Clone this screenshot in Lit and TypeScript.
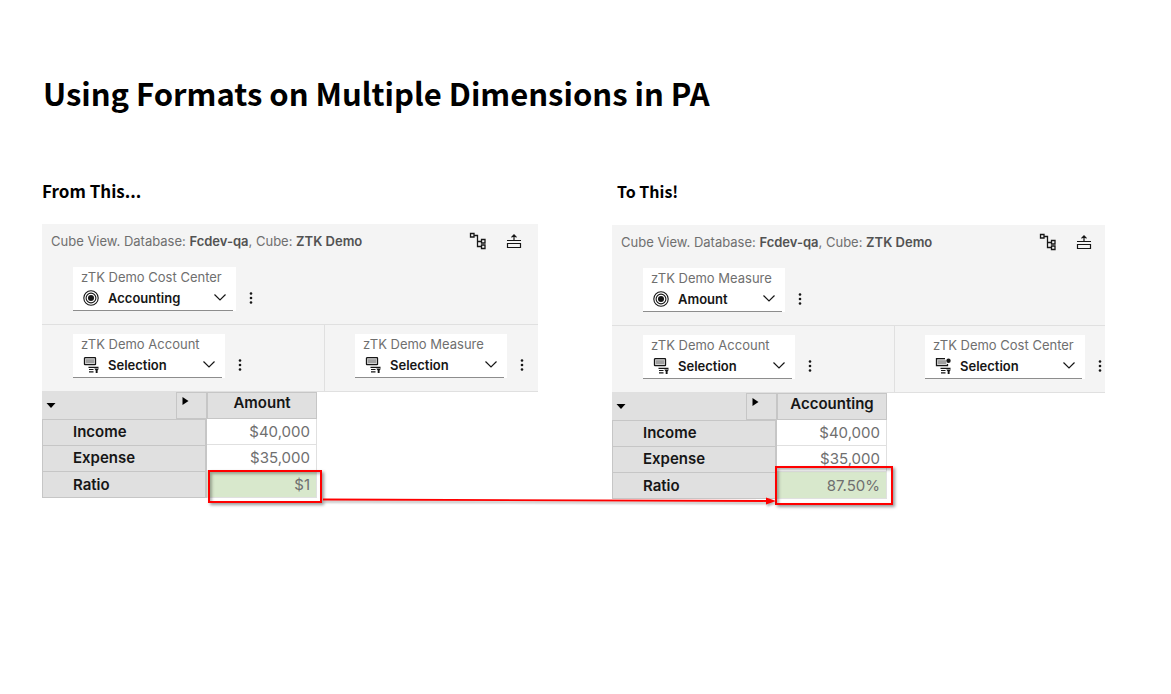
import { LitElement, html, svg, css } from "lit";
import { customElement, property } from "lit/decorators.js";

type Glyph = "member" | "set" | "setDot";

interface Selector {
  label: string;
  value: string;
  glyph: Glyph;
  width: number;
}

interface View {
  context: Selector;
  rows: Selector;
  columns: Selector;
  header: string;
  ratio: string;
}

const FROM: View = {
  context: { label: "zTK Demo Cost Center", value: "Accounting", glyph: "member", width: 160 },
  rows: { label: "zTK Demo Account", value: "Selection", glyph: "set", width: 149 },
  columns: { label: "zTK Demo Measure", value: "Selection", glyph: "set", width: 149 },
  header: "Amount",
  ratio: "$1",
};

const TO: View = {
  context: { label: "zTK Demo Measure", value: "Amount", glyph: "member", width: 139 },
  rows: { label: "zTK Demo Account", value: "Selection", glyph: "set", width: 149 },
  columns: { label: "zTK Demo Cost Center", value: "Selection", glyph: "setDot", width: 157 },
  header: "Accounting",
  ratio: "87.50%",
};

const glyph = (kind: Glyph) => html`<svg class="glyph" viewBox="0 0 16 16" aria-hidden="true">
  ${kind === "member"
    ? svg`<circle cx="8" cy="8" r="7.2" fill="none" stroke="#161616" stroke-width="1.1"/>
        <circle cx="8" cy="8" r="4.9" fill="none" stroke="#161616" stroke-width="1.1"/>
        <circle cx="8" cy="8" r="3" fill="#161616"/>`
    : svg`${kind === "set"
          ? svg`<rect x="1.5" y="0.7" width="11" height="7" rx="0.5" fill="#e0e0e0" stroke="#161616" stroke-width="1.3"/>`
          : svg`<path d="M10 0.700H1.500V7.700H12.500V6" fill="#e0e0e0" stroke="#161616" stroke-width="1.3"/><circle cx="13.500" cy="2.700" r="2.200" fill="#161616"/>`}
        <rect x="3" y="2.2" width="8" height="4" fill="#a0a0a0"/>
        <path d="M5.500 10.300H15.500M6 12.500H10.500M6 14.800H10.500" fill="none" stroke="#161616" stroke-width="1.2"/>
        <path d="M11.300 11.600H16L14.600 13.600V16H12.700V13.600Z" fill="#161616"/>`}
</svg>`;

@customElement("dimension-select")
class DimensionSelect extends LitElement {
  @property({ attribute: false }) item!: Selector;

  static styles = css`
    :host {
      display: flex;
      align-items: flex-start;
    }
    .tile {
      background: #fff;
      padding-right: 3px;
      height: 44px;
    }
    .inner {
      height: 43px;
      border-bottom: 1px solid #8d8d8d;
    }
    label {
      display: block;
      padding-left: 8px;
      font-size: 13px;
      line-height: 20px;
      color: #6f6f6f;
      white-space: nowrap;
    }
    .field {
      display: grid;
      grid-template-columns: 16px 1fr 14px;
      align-items: center;
      height: 22px;
      padding: 0 6px 0 10px;
    }
    .glyph, .chevron {
      grid-row: 1;
      pointer-events: none;
      z-index: 1;
    }
    .glyph {
      grid-column: 1;
      width: 16px;
      height: 16px;
    }
    .chevron {
      grid-column: 3;
      width: 14px;
      height: 14px;
    }
    select {
      grid-row: 1;
      grid-column: 1 / -1;
      appearance: none;
      border: 0;
      margin: 0;
      padding: 0 16px 0 25px;
      background: transparent;
      font: 600 13px/20px Inter, sans-serif;
      color: #161616;
      min-width: 0;
    }
    .more {
      border: 0;
      padding: 0;
      margin: 23px 0 0 9px;
      width: 12px;
      height: 16px;
      flex: none;
      background: transparent;
    }
    .more svg {
      display: block;
      width: 12px;
      height: 16px;
    }
  `;

  render() {
    const { label, value, glyph: kind, width } = this.item;
    return html`
      <div class="tile">
        <div class="inner" style="width:${width}px">
          <label for="member">${label}</label>
          <div class="field">
            ${glyph(kind)}
            <select id="member"><option>${value}</option></select>
            <svg class="chevron" viewBox="0 0 14 14" aria-hidden="true"><path d="M1.500 3.500L7 9L12.500 3.500" fill="none" stroke="#161616" stroke-width="1.2"/></svg>
          </div>
        </div>
      </div>
      <button class="more" aria-label="More options">
        <svg viewBox="0 0 12 16" aria-hidden="true"><g fill="#161616"><circle cx="6" cy="3.500" r="1.300"/><circle cx="6" cy="8" r="1.300"/><circle cx="6" cy="12.500" r="1.300"/></g></svg>
      </button>
    `;
  }
}

@customElement("cube-view")
class CubeView extends LitElement {
  @property({ attribute: false }) view!: View;

  static styles = css`
    :host {
      display: block;
    }
    .panel {
      background: #f4f4f4;
      color: #6f6f6f;
      overflow: hidden;
    }
    .head {
      display: flex;
      justify-content: space-between;
      align-items: center;
      height: 34px;
      padding: 0 15px 0 9px;
      font-size: 13px;
      line-height: 20px;
      white-space: nowrap;
    }
    .head b {
      font-weight: 600;
      color: #525252;
    }
    .snug {
      padding-right: 12px;
    }
    .tools {
      display: flex;
      gap: 18px;
    }
    .tools button {
      border: 0;
      padding: 0;
      background: transparent;
      width: 18px;
      height: 18px;
    }
    .tools svg {
      display: block;
      width: 18px;
      height: 18px;
    }
    .shelf {
      border-left: 1px solid transparent;
      padding: 9px 0 13px 30px;
      min-width: 0;
    }
    .axes {
      display: grid;
      grid-template-columns: 282px 1fr;
      border: 1px solid #e0e0e0;
      border-width: 1px 0;
    }
    .axes .shelf + .shelf {
      border-left-color: #e0e0e0;
    }
    table {
      border-collapse: separate;
      border-spacing: 0;
      table-layout: fixed;
      width: 275px;
      font-size: 15px;
      line-height: 20px;
      color: #161616;
    }
    .c-name { width: 134px; }
    .c-step { width: 31px; }
    th, td {
      box-sizing: border-box;
      height: 26px;
      padding: 0;
    }
    th {
      background: #e0e0e0;
      border: 0 solid #c6c6c6;
      font-weight: 600;
    }
    .corner, .step, .col {
      height: 27px;
    }
    .corner { text-align: left; }
    .step, .col {
      border-width: 1px;
      vertical-align: top;
    }
    .name {
      text-align: left;
      padding: 0 0 2px 30px;
      border-width: 1px 2px 0 1px;
    }
    .last .name {
      padding-bottom: 0;
      border-bottom-width: 1px;
    }
    .last th, .last td { height: 27px; }
    td {
      background: #fff;
      color: #6f6f6f;
      text-align: right;
      padding-right: 6px;
      border-right: 1px solid #e0e0e0;
      border-bottom: 1px solid #e0e0e0;
    }
    .ratio {
      position: relative;
      padding-top: 2px;
      background: #d8e8cc;
    }
    .mark {
      position: absolute;
      inset: -1px -6px -6px 1px;
      border: 2px solid #ff0000;
      box-shadow: 2px 2px 3px rgba(0, 0, 0, 0.4), inset 2px 2px 3px rgba(0, 0, 0, 0.3);
    }
    .wide {
      inset: -6px -7px -7px -2px;
    }
    .tri {
      border: 0;
      padding: 0;
      background: transparent;
      display: block;
      width: 10px;
      height: 10px;
    }
    .tri svg {
      display: block;
      width: 10px;
      height: 10px;
    }
    .corner .tri { margin-left: 4px; }
    .step .tri { margin: 3px 0 0 4px; }
  `;

  render() {
    const v = this.view;
    return html`
      <div class="panel">
        <div class="head ${v === TO ? "snug" : ""}">
          <span>Cube View. Database: <b>Fcdev-qa</b>, Cube: <b>ZTK Demo</b></span>
          <div class="tools">
            <button aria-label="Hierarchy">
              <svg viewBox="0 0 18 18" aria-hidden="true"><path d="M1.500 1.500H5V5H1.500ZM5 3.500H8.500V14.500H12M8.500 9.500H12M12.500 7.500H16V11H12.500ZM12.500 13H16V16.500H12.500Z" fill="none" stroke="#161616" stroke-width="1.300"/></svg>
            </button>
            <button aria-label="Collapse">
              <svg viewBox="0 0 18 18" aria-hidden="true"><path d="M2.500 11.500H15.500V15.500H2.500ZM2 8.500H16M9 8.500V3M6.500 5.300L9 2.800L11.500 5.300" fill="none" stroke="#161616" stroke-width="1.200"/></svg>
            </button>
          </div>
        </div>
        <div class="shelf"><dimension-select .item=${v.context}></dimension-select></div>
        <div class="axes">
          <div class="shelf"><dimension-select .item=${v.rows}></dimension-select></div>
          <div class="shelf"><dimension-select .item=${v.columns}></dimension-select></div>
        </div>
      </div>
      <table>
        <colgroup><col class="c-name"><col class="c-step"><col></colgroup>
        <thead>
          <tr>
            <th class="corner"><button class="tri" aria-label="Expand rows"><svg viewBox="0 0 10 10"><path d="M0.500 2H9.500L5 7Z" fill="#000"/></svg></button></th>
            <th class="step"><button class="tri" aria-label="Expand columns"><svg viewBox="0 0 10 10"><path d="M1.500 1V9L7.500 5Z" fill="#000"/></svg></button></th>
            <th class="col" scope="col">${v.header}</th>
          </tr>
        </thead>
        <tbody>
          <tr><th class="name" scope="row" colspan="2">Income</th><td>$40,000</td></tr>
          <tr><th class="name" scope="row" colspan="2">Expense</th><td>$35,000</td></tr>
          <tr class="last"><th class="name" scope="row" colspan="2">Ratio</th><td class="ratio">${v.ratio}<span class="mark ${v === TO ? "wide" : ""}"></span></td></tr>
        </tbody>
      </table>
    `;
  }
}

@customElement("app-root")
class AppRoot extends LitElement {
  static styles = css`
    :host {
      display: block;
      box-sizing: border-box;
      min-height: 100vh;
      padding: 69px 66px 40px 42px;
      background: #fff;
      color: #000;
      font-family: Inter, sans-serif;
    }
    h1, h2 {
      margin: 0;
      font-family: "Noto Sans CJK SC", sans-serif;
      font-weight: 700;
    }
    h1 {
      padding-left: 1px;
      font-size: 31px;
      line-height: 48px;
    }
    .compare {
      position: relative;
      display: grid;
      grid-template-columns: 496fr 493fr;
      column-gap: 74px;
      margin-top: 61px;
    }
    h2 {
      font-size: 17px;
      line-height: 26px;
      margin-bottom: 20px;
    }
    .after h2 {
      font-size: 16px;
      padding-left: 5px;
      margin-bottom: 21px;
    }
    .arrow {
      position: absolute;
      top: 319px;
      left: 281px;
      right: calc((100% - 74px) * 0.4985 - 164px);
      height: 8px;
      display: flex;
      filter: drop-shadow(1px 2px 1px rgba(0, 0, 0, 0.3));
    }
    .shaft {
      flex: 1;
      min-width: 0;
      height: 8px;
    }
    .tip {
      flex: none;
      width: 10px;
      height: 8px;
    }
  `;

  render() {
    return html`
      <h1>Using Formats on Multiple Dimensions in PA</h1>
      <div class="compare">
        <section class="before">
          <h2>From This...</h2>
          <cube-view .view=${FROM}></cube-view>
        </section>
        <section class="after">
          <h2>To This!</h2>
          <cube-view .view=${TO}></cube-view>
        </section>
        <div class="arrow" aria-hidden="true">
          <svg class="shaft" viewBox="0 0 100 8" preserveAspectRatio="none"><path d="M0 2.500L100 4" stroke="#ff0000" stroke-width="1.800"/></svg>
          <svg class="tip" viewBox="0 0 10 8"><path d="M0 0.500L10 4L0 7.500Z" fill="#ff0000"/></svg>
        </div>
      </div>
    `;
  }
}
